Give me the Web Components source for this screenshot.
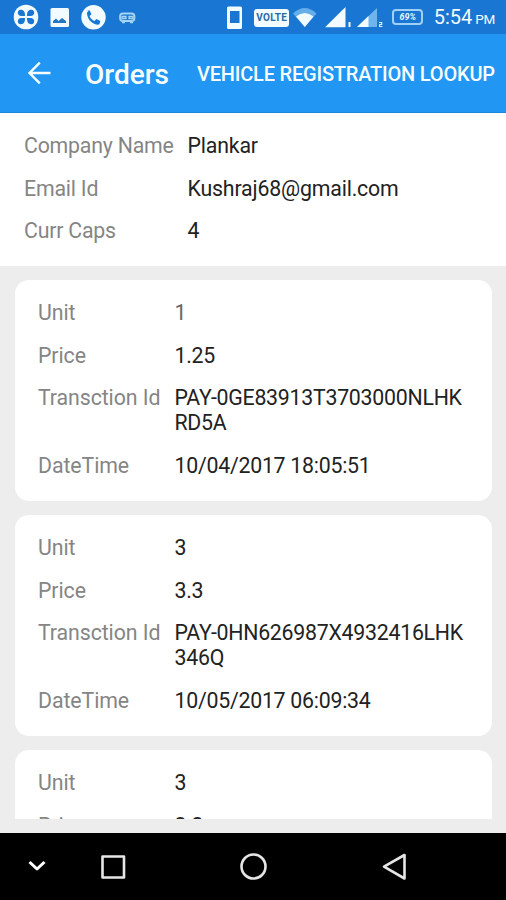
<!DOCTYPE html>
<html lang="en">
<head>
<meta charset="utf-8">
<title>Orders</title>
<style>
html, body { margin: 0; padding: 0; height: 900px; overflow: hidden; }
body { font-family: Roboto, "Liberation Sans", sans-serif; background: #ededed; }
</style>
</head>
<body>
<orders-screen></orders-screen>
<script>
const define = (name, html, init) => {
  const t = document.createElement('template');
  t.innerHTML = html;
  customElements.define(name, class extends HTMLElement {
    constructor() {
      super();
      this.attachShadow({ mode: 'open' }).append(t.content.cloneNode(true));
    }
    connectedCallback() { if (init) init(this, this.shadowRoot); }
  });
};

define('status-bar', `
<style>
:host { display: flex; align-items: center; justify-content: space-between; box-sizing: border-box; height: 34px; background: #1976d2; color: #f2fbff; padding: 0 11px 0 13px; }
svg { display: block; }
.right { display: flex; align-items: center; }
.volte { box-sizing: border-box; width: 35px; height: 18px; margin: 1px 4px 0 12px; border-radius: 3px; background: #f2fbff; color: #2a6aa5; font: 700 10px/18px Roboto, sans-serif; letter-spacing: .3px; text-align: center; }
.batt { box-sizing: border-box; width: 31px; height: 16px; margin: 0 10.500px 0 9px; border: 2px solid #9fd0f7; border-radius: 4px; color: #e6f6ff; font: italic 700 9px/12px Roboto, sans-serif; text-align: center; }
.time { font-size: 20px; line-height: 34px; white-space: nowrap; padding-top: 2px; }
.time small { font-size: 13.500px; margin-left: 3px; letter-spacing: -.3px; }
</style>
<svg width="130" height="34" viewBox="13 0 130 34">
  <circle cx="26" cy="17" r="12.3" fill="#f2fbff"/>
  <g fill="#1976d2">
    <path d="M25 16h-3.500c-5 0-4.500-6-1-6.200C24 9.700 25 12 25 16z"/>
    <path d="M27 16h3.500c5 0 4.500-6 1-6.200C28 9.700 27 12 27 16z"/>
    <path d="M25 18h-3.500c-5 0-4.500 6-1 6.200C24 24.300 25 22 25 18z"/>
    <path d="M27 18h3.500c5 0 4.500 6 1 6.200C28 24.300 27 22 27 18z"/>
  </g>
  <rect x="50.500" y="8" width="18.500" height="19" rx="1.500" fill="#f2fbff"/>
  <path d="M53 23v-2l3-2.500 2.500 2.500 3.500-3 4 3v2z" fill="#2376c0"/>
  <circle cx="93.500" cy="17.300" r="12.200" fill="#f2fbff"/>
  <path d="M87.500 11.500l2.500-.7 2 4-2 1.800c1 2.400 2.700 4 5 5l1.900-2 3.900 2-.7 2.700c-.6 1-2 1-3.200.7-5-1.300-8.700-5.200-9.400-10.800 0-1.300.6-2.500 2-2.700z" transform="translate(-.5 -.5)" fill="#1976d2"/>
  <g fill="none" stroke="#a5d4f5" stroke-width="1.800">
    <rect x="120" y="13.500" width="14.500" height="7.500" rx="3"/>
    <path d="M122 16.500h4v2h-4zM129 16.500h4v2h-4zM122 22.500h3M130 22.500h3" stroke-width="1.300"/>
  </g>
</svg>
<div class="right">
  <svg width="15" height="23" viewBox="0 0 15 23"><rect y=".5" width="15" height="22.500" rx="1.500" fill="#f2fbff"/><rect x="3" y="5" width="9.500" height="12" fill="#1976d2"/></svg>
  <div class="volte">VOLTE</div>
  <svg width="90" height="34" viewBox="293 0 90 34">
    <path d="M293 13.500Q304.800 2.500 316.500 13.500L304.800 27z" fill="#66aeea"/>
    <path d="M296 16.500Q304.800 9.500 313.500 16.500L304.800 27z" fill="#f2fbff"/>
    <path d="M325 27.200L345.500 7v20.200zM348.500 22h2v5h-2z" fill="#f2fbff"/>
    <path d="M357 27L377 8v19z" fill="#6eb4ed"/>
    <path d="M357 27l11.500-11v11z" fill="#f2fbff"/>
    <path d="M379 22.500h2.700v2h-2v2h2.700" fill="none" stroke="#d9f0ff" stroke-width="1.200"/>
  </svg>
  <div class="batt">69%</div>
  <div class="time">5:54<small>PM</small></div>
</div>`);

define('app-bar', `
<style>
:host { display: flex; align-items: center; box-sizing: border-box; height: 79px; background: #2196f3; border-bottom: 1px solid #1a86dc; color: #f7fdff; padding-left: 27px; white-space: nowrap; font-weight: 500; }
svg { display: block; flex: none; }
.title { width: 112px; margin-left: 34px; font-size: 28px; padding-top: 3px; }
.action { font-size: 20px; padding-top: 1px; letter-spacing: -.2px; }
</style>
<svg width="24" height="24" viewBox="0 0 24 24" fill="none" stroke="#f7fdff" stroke-width="2.400"><path d="M23.500 12H2.500M12.800 1.700L2.500 12l10.300 10.300"/></svg>
<div class="title"><slot name="title"></slot></div>
<div class="action"><slot name="action"></slot></div>`);

define('field-row', `
<style>
:host { display: grid; grid-template-columns: var(--label-width, 136.500px) 1fr; font-size: 21.300px; line-height: 25px; white-space: nowrap; }
.label { color: #858585; letter-spacing: var(--label-spacing, -.08px); }
.value { color: var(--value-color, #222); letter-spacing: var(--value-spacing, -.25px); }
</style>
<div class="label"></div><div class="value"><slot></slot></div>`,
(el, root) => { root.querySelector('.label').textContent = el.getAttribute('label'); });

define('company-info', `
<style>
:host { display: flex; flex-direction: column; gap: 17.600px; box-sizing: border-box; height: 153px; padding: 20px 24px 0; background: #fff; --label-width: 163.500px; --label-spacing: -.2px; --value-spacing: -.17px; }
</style><slot></slot>`);

define('order-card', `
<style>
:host { display: flex; flex-direction: column; flex: none; gap: 17.600px; box-sizing: border-box; height: 221px; padding: 20px 20px 0 23px; background: #fff; border-radius: 14px; }
</style><slot></slot>`);

define('order-list', `
<style>
:host { display: flex; flex-direction: column; gap: 14px; box-sizing: border-box; height: 539px; margin: 14px 14px 14px 15px; overflow: hidden; }
</style><slot></slot>`);

define('nav-bar', `
<style>
:host { display: block; height: 67px; background: #000; }
svg { display: block; }
</style>
<svg width="506" height="67" viewBox="0 833 506 67" fill="none" stroke="#e6e6e6" stroke-width="2.600" stroke-linejoin="round">
  <path d="M29.500 862l7.500 7 7.500-7" stroke="#fff" stroke-width="3"/>
  <rect x="102.500" y="856.500" width="21.500" height="21"/>
  <circle cx="253.500" cy="866.500" r="12"/>
  <path d="M404.500 855v23.500L384 866.700z"/>
</svg>`);

define('orders-screen', `
<style>
:host { display: flex; flex-direction: column; width: 506px; height: 900px; overflow: hidden; background: #ededed; }
order-list { flex: none; }
</style>
<status-bar></status-bar>
<app-bar><span slot="title">Orders</span><span slot="action">VEHICLE REGISTRATION LOOKUP</span></app-bar>
<company-info>
  <field-row label="Company Name">Plankar</field-row>
  <field-row label="Email Id">Kushraj68@gmail.com</field-row>
  <field-row label="Curr Caps">4</field-row>
</company-info>
<order-list>
  <order-card>
    <field-row label="Unit" style="--value-color:#666">1</field-row>
    <field-row label="Price">1.25</field-row>
    <field-row label="Transction Id">PAY-0GE83913T3703000NLHK<br>RD5A</field-row>
    <field-row label="DateTime">10/04/2017 18:05:51</field-row>
  </order-card>
  <order-card>
    <field-row label="Unit">3</field-row>
    <field-row label="Price">3.3</field-row>
    <field-row label="Transction Id">PAY-0HN626987X4932416LHK<br>346Q</field-row>
    <field-row label="DateTime">10/05/2017 06:09:34</field-row>
  </order-card>
  <order-card>
    <field-row label="Unit">3</field-row>
    <field-row label="Price">3.3</field-row>
  </order-card>
</order-list>
<nav-bar></nav-bar>`);
</script>
</body>
</html>
